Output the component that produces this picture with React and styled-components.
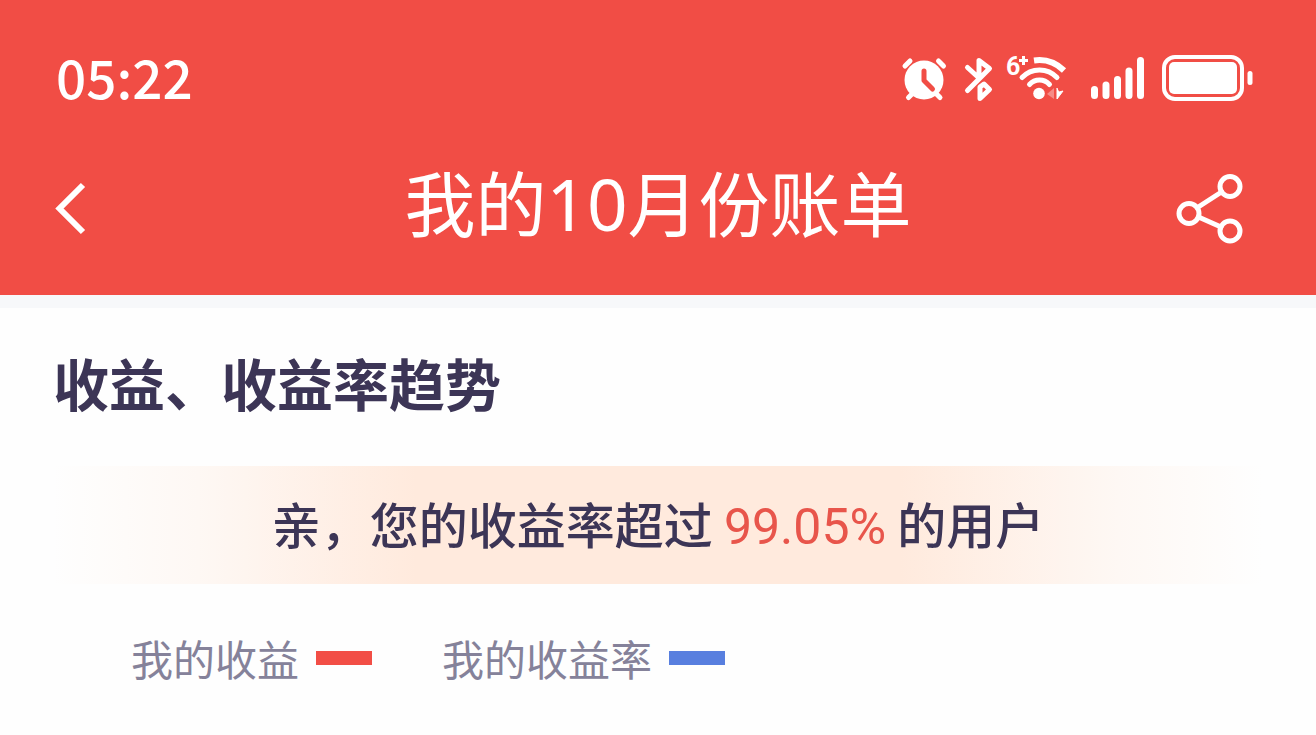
import styled, { createGlobalStyle } from "styled-components";

const GlobalStyle = createGlobalStyle`
  * {
    box-sizing: border-box;
    margin: 0;
    padding: 0;
  }

  body {
    background: #fefefe;
    color: #3c3556;
    font-family: "Noto Sans CJK SC", sans-serif;
  }
`;

const Header = styled.header`
  background: #f14d45;
  color: #fff;
  padding: 54px 54px 31px;
`;

const StatusBar = styled.div`
  display: flex;
  align-items: center;
  justify-content: space-between;
  height: 48px;
  padding: 0 8px 0 2px;
`;

const Time = styled.time`
  font-size: 53px;
  font-weight: 500;
  line-height: 44px;
  padding-bottom: 4px;
`;

const StatusIcons = styled.div`
  display: flex;
  gap: 10px;
`;

const Icon = styled.svg`
  display: block;
  flex: none;
  overflow: visible;
  fill: none;
  stroke: #fff;
  stroke-linecap: round;
  stroke-linejoin: round;
`;

const NetworkLabel = styled.text`
  fill: #fff;
  stroke: none;
  font-family: Roboto, sans-serif;
  font-size: 25px;
  font-weight: 700;
`;

const NavBar = styled.nav`
  display: grid;
  grid-template-columns: 1fr auto 1fr;
  align-items: center;
  margin-top: 52px;
`;

const IconButton = styled.button`
  border: 0;
  background: none;
  color: inherit;
  cursor: pointer;
  justify-self: ${({ $side }) => $side};
`;

const Title = styled.h1`
  font-family: "Noto Sans", "Noto Sans CJK SC", sans-serif;
  font-size: 71px;
  font-weight: 400;
  line-height: 100px;
  padding-bottom: 10px;
`;

const Section = styled.section`
  border-top: 13px solid #f7f8fa;
  padding: 36px 53px;
`;

const SectionTitle = styled.h2`
  font-size: 56px;
  font-weight: 700;
  line-height: 76px;
`;

const Banner = styled.p`
  margin-top: 46px;
  padding-bottom: 4px;
  background: linear-gradient(
    to right,
    rgba(255, 234, 221, 0),
    rgba(255, 234, 221, 0.3) 12%,
    #ffeadd 30%,
    #ffeadd 70%,
    rgba(255, 234, 221, 0.3) 88%,
    rgba(255, 234, 221, 0)
  );
  font-size: 49px;
  font-weight: 500;
  line-height: 114px;
  text-align: center;
`;

const Rate = styled.strong`
  color: #e8554b;
  font-family: Roboto, sans-serif;
  font-size: 50px;
  font-weight: 400;
  line-height: 1;
`;

const Legend = styled.ul`
  display: flex;
  gap: 70px;
  margin-top: 44px;
  padding: 0 78px;
  list-style: none;
`;

const LegendItem = styled.li`
  display: flex;
  align-items: center;
  gap: 17px;
  color: #85829a;
  font-size: 42px;
  line-height: 60px;

  &::after {
    content: "";
    width: 56px;
    height: 14px;
    background: ${({ $color }) => $color};
  }
`;

const AlarmIcon = () => (
  <Icon width="48" height="48" viewBox="0 0 48 48" aria-label="闹钟">
    <circle cx="22" cy="26" r="19.5" fill="#fff" stroke="none" />
    <path
      d="M3 12 8 7M36.5 7l5 5M12 38l-5.500 5.500M32.500 38l5.500 5.500"
      strokeWidth="5"
    />
    <path d="M22 17v9.500l8.500 8.500" stroke="#f14d45" strokeWidth="5" />
  </Icon>
);

const BluetoothIcon = () => (
  <Icon width="36" height="48" viewBox="0 0 36 48" aria-label="蓝牙">
    <path
      d="M7.500 13.500 19 24V6.500l10.500 8L7.500 36.500M20 33v11.500l9.500-9-5.500-5.500z"
      strokeWidth="5"
    />
  </Icon>
);

const WifiIcon = () => (
  <Icon width="66" height="48" viewBox="0 0 66 48" aria-label="无线网络">
    <NetworkLabel x="0" y="21">
      6
    </NetworkLabel>
    <path d="M13 6.500h9M17.500 2v9" strokeWidth="3" strokeLinecap="butt" />
    <circle cx="33" cy="39.500" r="5.800" fill="#fff" stroke="none" />
    <path d="M23.500 30.500a13.500 13.500 0 0 1 20 0" strokeWidth="5" />
    <path d="M16 23.500a24 24 0 0 1 35 0" strokeWidth="5" />
    <path d="M28 6.500Q45 4 58 16.500" strokeWidth="6" strokeLinecap="butt" />
    <path d="m41 40 7-6v11z" fill="#fff" stroke="none" opacity="0.35" />
    <path d="M51 34.500v10.500l6-8-4 1z" fill="#fff" strokeWidth="1" />
  </Icon>
);

const SignalIcon = () => (
  <Icon width="70" height="48" viewBox="0 0 70 48" aria-label="信号">
    <path
      d="M12.500 35.500v6M24 31v10.500M35.500 25.500v16M47 17v24.500M58.500 6.500v35"
      strokeWidth="7"
    />
  </Icon>
);

const BatteryIcon = () => (
  <Icon width="92" height="48" viewBox="0 0 92 48" aria-label="电池">
    <rect x="2" y="3" width="78" height="42" rx="11" strokeWidth="4" />
    <rect x="7" y="8" width="68" height="32" rx="5" fill="#fff" stroke="none" />
    <path d="M88 19.500v9" strokeWidth="5" />
  </Icon>
);

const BackIcon = () => (
  <Icon width="36" height="56" viewBox="0 0 36 56" aria-hidden="true">
    <path
      d="M29 4 5.500 27.500 29 51"
      strokeWidth="6"
      strokeLinecap="butt"
      strokeLinejoin="miter"
    />
  </Icon>
);

const ShareIcon = () => (
  <Icon width="92" height="76" viewBox="0 0 92 76" aria-hidden="true">
    <g strokeWidth="5">
      <circle cx="60" cy="15.500" r="10" />
      <circle cx="19" cy="42.500" r="10" />
      <circle cx="60" cy="60" r="10" />
      <path d="M27.500 36.500 51.500 21M28.500 46l22.500 10" />
    </g>
  </Icon>
);

const series = [
  { name: "我的收益", color: "#f24e46" },
  { name: "我的收益率", color: "#587fdf" },
];

const App = () => {
  return (
    <>
      <GlobalStyle />

      <Header>
        <StatusBar>
          <Time>05:22</Time>
          <StatusIcons>
            <AlarmIcon />
            <BluetoothIcon />
            <WifiIcon />
            <SignalIcon />
            <BatteryIcon />
          </StatusIcons>
        </StatusBar>

        <NavBar>
          <IconButton $side="start" aria-label="返回">
            <BackIcon />
          </IconButton>
          <Title>我的10月份账单</Title>
          <IconButton $side="end" aria-label="分享">
            <ShareIcon />
          </IconButton>
        </NavBar>
      </Header>

      <Section>
        <SectionTitle>收益、收益率趋势</SectionTitle>
        <Banner>
          亲，您的收益率超过 <Rate>99.05%</Rate> 的用户
        </Banner>
        <Legend>
          {series.map(({ name, color }) => (
            <LegendItem key={name} $color={color}>
              {name}
            </LegendItem>
          ))}
        </Legend>
      </Section>
    </>
  );
};

export default App;
